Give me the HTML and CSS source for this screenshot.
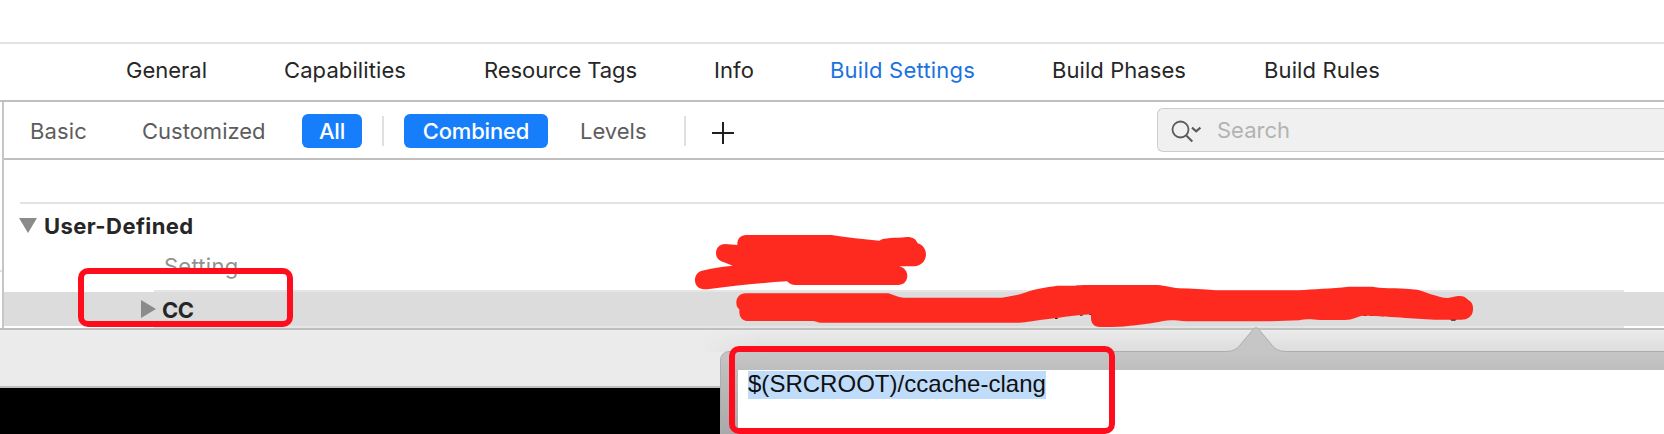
FILE: index.html
```html
<!DOCTYPE html>
<html lang="en">
<head>
<meta charset="utf-8">
<title>Build Settings</title>
<link rel="stylesheet" href="styles.css">
</head>
<body>
<div class="window">
  <nav class="tabs">
    <a class="tab general">General</a>
    <a class="tab capabilities">Capabilities</a>
    <a class="tab resources">Resource Tags</a>
    <a class="tab info">Info</a>
    <a class="tab settings active">Build Settings</a>
    <a class="tab phases">Build Phases</a>
    <a class="tab rules">Build Rules</a>
  </nav>
  <main class="editor">
    <div class="toolbar">
      <span class="filter basic">Basic</span>
      <span class="filter customized">Customized</span>
      <span class="pill all">All</span>
      <i class="sep"></i>
      <span class="pill combined">Combined</span>
      <span class="filter levels">Levels</span>
      <i class="sep sep-add"></i>
      <svg class="plus" width="22" height="22" viewBox="0 0 22 22"><path d="M11 0V22M0 11H22" stroke="#1f1f1f" stroke-width="2"/></svg>
      <div class="search">
        <svg class="glass" width="32" height="26" viewBox="0 0 32 26" fill="none" stroke="#5b5b5b" stroke-width="1.8"><circle cx="10.5" cy="10.5" r="8"/><path d="M16 16.2L22.3 22.4" stroke-width="2.1"/><path d="M22 8.6L26.2 12.3L30.4 8.6" stroke-width="2.1"/></svg>
        <span class="placeholder">Search</span>
      </div>
    </div>
    <section class="list">
      <div class="group">
        <svg width="18" height="15" viewBox="0 0 18 15"><path d="M0 0H18L9 15Z" fill="#8b8b8b"/></svg>
        <b class="group-name">User-Defined</b>
      </div>
      <div class="heading"><span class="setting">Setting</span></div>
      <div class="rule"></div>
      <div class="row">
        <svg width="15" height="18" viewBox="0 0 15 18"><path d="M0 0L15 9L0 18Z" fill="#8b8b8b"/></svg>
        <b class="key">CC</b>
      </div>
      <div class="rule"></div>
    </section>
  </main>
  <footer class="footer"></footer>

  <i class="tick"></i>
  <div class="shade"></div>
  <div class="popover">
    <div class="field"><span class="value">$(SRCROOT)/ccache-clang</span></div>
  </div>
  <svg class="arrow" width="62" height="28" viewBox="0 0 62 28"><path d="M0 26.5C10 26.5 12.500 23 16 19L28 4.500Q31 1 34 4.500L46 19C49.500 23 52 26.500 62 26.500V28H0Z" fill="#c6c6c6"/><path d="M0 26.500C10 26.500 12.500 23 16 19L28 4.500Q31 1 34 4.500L46 19C49.500 23 52 26.500 62 26.500" fill="none" stroke="#adadad"/></svg>

  <svg class="scribble" width="800" height="114" viewBox="0 0 2400 342">
    <path d="M1125 293h8v4h-8zM1200 284h8v3h-8zM1228 282h7v3h-7zM2050 284h10v4h-10zM2070 284h14v4h-14zM2102 285h10v4h-10zM2310 297h20l-4 5h-12z" fill="#3a1f1d"/>
    <g fill="#ff2a1f">
      <path d="M172 75C171 57 181 45 199 45H455C500 53 550 58 598 62C615 52 640 55 681 51C700 51 708 58 713 70C730 76 738 88 738 105C736 125 722 138 703 139H658C675 144 682 155 682 169C680 186 670 195 654 195H347C335 195 328 191 321 184C240 189 160 197 82 208C57 209 45 199 45 180C45 164 56 153 72 151C100 144 130 140 158 137L130 126C116 122 108 113 108 99C109 83 119 72 135 72Z"/>
      <path d="M169 248C169 231 181 220 197 220H625C640 224 652 232 670 233H965C990 229 1010 227 1032 219C1067 205 1095 203 1132 197H1185C1200 194 1225 195 1250 195H1434C1455 197 1470 202 1498 205C1535 206 1570 208 1607 211H1855C1900 206 1955 207 2005 200H2077C2100 206 2140 202 2212 209C2240 217 2275 232 2303 234C2316 233 2320 229 2335 228C2350 227 2357 232 2364 239C2377 247 2380 256 2379 269C2378 289 2363 299 2344 299H2277C2210 298 2150 289 2047 287C2030 290 2020 299 1995 300H1920C1895 298 1880 296 1858 301C1800 304 1740 304 1660 304H1520C1490 302 1470 299 1450 303C1410 311 1380 315 1350 317C1320 321 1285 322 1260 321C1241 321 1233 309 1233 295V283C1180 285 1130 296 1080 300C1050 304 1030 309 1000 308H422C415 308 410 304 400 303H205C186 303 178 290 178 275V268C172 263 169 258 169 248Z"/>
    </g>
  </svg>
  <div class="mark mark-key"></div>
  <div class="mark mark-value"></div>
</div>
</body>
</html>
```
FILE: styles.css
```css
* { box-sizing: border-box; }
body { margin: 0; background: #000; }
.window {
  position: relative;
  width: 1664px;
  height: 434px;
  overflow: hidden;
  padding-top: 42px;
  background: linear-gradient(#fff 388px, #000 388px);
  font: 22px/28px Inter, "Liberation Sans", sans-serif;
  color: #262626;
  white-space: nowrap;
}
.tabs {
  display: flex;
  height: 60px;
  padding: 12px 0 0 126px;
  border-top: 2px solid #e3e3e3;
  border-bottom: 2px solid #bfbfbf;
}
.tab { flex: none; }
.general { width: 158px; }
.capabilities { width: 200px; letter-spacing: .1px; }
.resources { width: 230px; letter-spacing: -.08px; }
.info { width: 116px; letter-spacing: .1px; }
.settings { width: 222px; letter-spacing: .23px; }
.phases { width: 212px; letter-spacing: .07px; }
.rules { letter-spacing: .12px; }
.active { color: #1a73e0; }

.editor { height: 226px; margin-left: 2px; border-left: 2px solid #c6c6c6; }
.toolbar {
  display: flex;
  height: 58px;
  padding: 6px 0 0 26px;
  border-bottom: 2px solid #bfbfbf;
}
.filter { margin-top: 9px; color: #5d5d5d; }
.basic { width: 112px; letter-spacing: .15px; }
.customized { width: 156px; }
.pill {
  height: 34px;
  margin-top: 6px;
  padding-top: 3px;
  border-radius: 6px;
  background: #167efb;
  color: #fff;
  font-weight: 500;
  letter-spacing: -.15px;
  text-align: center;
}
.all { width: 60px; margin-left: 4px; }
.combined { width: 144px; }
.sep { width: 2px; height: 30px; margin: 8px 20px 0; background: #e0e0e0; }
.levels { width: 84px; margin-left: 32px; }
.sep-add { margin-right: 26px; }
.plus { margin-top: 14px; }
.search {
  display: flex;
  flex: 1;
  height: 44px;
  margin-left: 423px;
  border: 1px solid #cdcdcd;
  border-right: 0;
  border-radius: 6px 0 0 6px;
  background: #f0f0f0;
}
.glass { margin: 10px 0 0 12px; }
.placeholder { margin: 7px 0 0 15px; color: #b3b3b3; }

.list { padding-top: 42px; }
.group {
  display: flex;
  height: 46px;
  margin-left: 16px;
  padding-top: 14px;
  border-top: 2px solid #e3e3e3;
}
.group svg { margin-left: -1px; }
.group-name { margin: -6px 0 0 7px; font-weight: 700; letter-spacing: .42px; }
.heading { height: 42px; padding: 4px 0 0 160px; color: #919191; letter-spacing: .25px; }
.rule { width: 1470px; height: 2px; margin-left: 150px; background: #e5e5e5; }
.row { display: flex; height: 34px; padding: 8px 0 0 137px; background: #dcdcdc; }
.key { margin: -4px 0 0 6px; font-weight: 700; letter-spacing: -.5px; }
.footer {
  height: 60px;
  border-top: 2px solid #bfbfbf;
  border-bottom: 2px solid #bfbfbf;
  background: #ebebeb;
}
.tick { position: absolute; left: 0; top: 270px; width: 2px; height: 2px; background: #e3e3e3; }

/* Soft shadow that the popover casts on the footer */
.shade {
  position: absolute;
  left: 700px;
  right: 0;
  top: 330px;
  height: 22px;
  background: linear-gradient(transparent, rgba(0, 0, 0, .06));
  mask-image: linear-gradient(90deg, transparent, #000 60px);
}
.popover {
  position: absolute;
  left: 720px;
  top: 351px;
  width: 960px;
  height: 100px;
  padding: 18px 0 0 17px;
  border: 1px solid #adadad;
  border-radius: 9px;
  background: linear-gradient(#c6c6c6, #bebebe 18px, #a4a4a4);
}
.field { height: 90px; padding-left: 10px; background: #fff; }
.value {
  display: inline-block;
  height: 28px;
  background: #c0dcfb;
  color: #101010;
  font: 24px/26px "Liberation Sans", Arial, sans-serif;
  letter-spacing: .02px;
}
.arrow { position: absolute; left: 1225px; top: 325px; }
.scribble { position: absolute; left: 680px; top: 220px; }
.mark { position: absolute; border: 6px solid #ff0d1d; border-radius: 10px; }
.mark-key { left: 78px; top: 268px; width: 215px; height: 59px; }
.mark-value { left: 729px; top: 346px; width: 386px; height: 88px; }
```
